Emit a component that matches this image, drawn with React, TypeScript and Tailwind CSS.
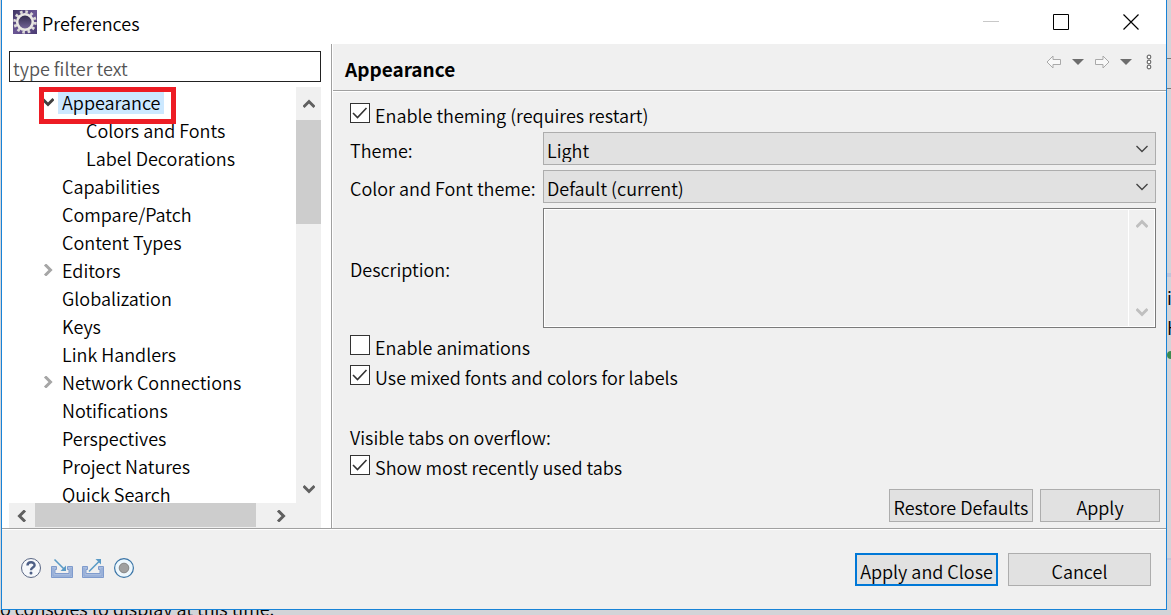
import { useState } from "react";
import type { ReactNode } from "react";
import clsx from "clsx";

interface TreeItem {
  label: string;
  child?: boolean;
  state?: "open" | "closed";
}

const treeItems: TreeItem[] = [
  { label: "Appearance", state: "open" },
  { label: "Colors and Fonts", child: true },
  { label: "Label Decorations", child: true },
  { label: "Capabilities" },
  { label: "Compare/Patch" },
  { label: "Content Types" },
  { label: "Editors", state: "closed" },
  { label: "Globalization" },
  { label: "Keys" },
  { label: "Link Handlers" },
  { label: "Network Connections", state: "closed" },
  { label: "Notifications" },
  { label: "Perspectives" },
  { label: "Project Natures" },
  { label: "Quick Search" },
];

const rotations = {
  up: "",
  right: "rotate-90",
  down: "rotate-180",
  left: "-rotate-90",
};

function Chevron({
  dir,
  className,
}: {
  dir: keyof typeof rotations;
  className?: string;
}) {
  return (
    <svg
      viewBox="0 0 12 12"
      className={clsx("size-3 shrink-0", rotations[dir], className)}
      fill="none"
      stroke="currentColor"
      strokeWidth="3"
    >
      <path d="M.5 9 6 3.500 11.500 9" />
    </svg>
  );
}

function GearIcon() {
  return (
    <svg viewBox="0 0 24 24" className="size-6 shrink-0">
      <defs>
        <linearGradient id="gear-bg" x1="0" y1="0" x2="1" y2="1">
          <stop offset="0" stopColor="#3f3561" />
          <stop offset="0.5" stopColor="#6a5694" />
          <stop offset="1" stopColor="#4a3b72" />
        </linearGradient>
        <linearGradient id="gear-core" x1="0" y1="0" x2="0" y2="1">
          <stop offset="0" stopColor="#2d2748" />
          <stop offset="1" stopColor="#79699e" />
        </linearGradient>
      </defs>
      <rect width="24" height="24" fill="url(#gear-bg)" />
      <circle
        cx="12"
        cy="12"
        r="10.200"
        fill="none"
        stroke="#dcdad8"
        strokeWidth="3"
        strokeDasharray="2.6 2.741"
      />
      <circle
        cx="12"
        cy="12"
        r="7.8"
        fill="url(#gear-core)"
        stroke="#e9e7e3"
        strokeWidth="2.6"
      />
    </svg>
  );
}

function ArrowIcon({ flip }: { flip?: boolean }) {
  return (
    <svg
      viewBox="0 0 16 14"
      className={clsx("h-3.5 w-4", flip && "-scale-x-100")}
      fill="#f8f8f8"
      stroke="#a9a9a9"
    >
      <path d="M1 7 7 1V4.500H14.500V9.500H7V13Z" strokeLinejoin="round" />
    </svg>
  );
}

function TriangleIcon() {
  return (
    <svg viewBox="0 0 12 6" className="h-1.5 w-3" fill="#6d6d6d">
      <path d="M0 0H12L6 6Z" />
    </svg>
  );
}

function MenuDotsIcon() {
  return (
    <svg
      viewBox="0 0 6 16"
      className="h-4 w-1.5"
      fill="#fff"
      stroke="#707070"
      strokeWidth="1.2"
    >
      <circle cx="3" cy="3" r="1.8" />
      <circle cx="3" cy="8" r="1.8" />
      <circle cx="3" cy="13" r="1.8" />
    </svg>
  );
}

function HelpIcon() {
  return (
    <svg viewBox="0 0 22 22" className="size-[22px]" fill="none">
      <circle cx="11" cy="11" r="9.500" fill="#f6f8fb" stroke="#5a6785" />
      <path
        d="M7.500 8.500C7.500 4.200 14.600 4.200 14.600 8.200C14.600 10.600 11 10.600 11 13.200"
        stroke="#4d5f86"
        strokeWidth="2.4"
      />
      <circle cx="11" cy="16" r="1.500" fill="#4d5f86" />
    </svg>
  );
}

function TrayIcon({ out }: { out?: boolean }) {
  return (
    <svg viewBox="0 0 22 22" className="size-[22px]" fill="none">
      <path
        d="M.5 9.500H5.500V12.500H4V16.500H18V12.500H16.500V9.500H21.500V20.500H.5Z"
        fill="#a9bddf"
        stroke="#7f9bcd"
      />
      <path d="M2 11V19H20V11" stroke="#8ca6d3" />
      {out ? (
        <>
          <path d="M7 14.500 17 4.500" stroke="#5a9ac6" strokeWidth="1.6" />
          <path d="M13.500 2H19V7.500Z" fill="#5a9ac6" />
        </>
      ) : (
        <>
          <path d="M3.500 2.500 13 12" stroke="#5a9ac6" strokeWidth="1.6" />
          <path d="M15 8.500V14H9.500Z" fill="#5a9ac6" />
        </>
      )}
    </svg>
  );
}

function RecordIcon() {
  return (
    <svg viewBox="0 0 22 22" className="size-[22px]">
      <circle cx="11" cy="11" r="9.400" fill="#edf7fd" stroke="#3a74a6" strokeWidth="1.2" />
      <circle cx="11" cy="11" r="4.800" fill="#a0a0a0" stroke="#858585" />
    </svg>
  );
}

function CheckField({
  label,
  defaultChecked,
}: {
  label: string;
  defaultChecked?: boolean;
}) {
  const [checked, setChecked] = useState(!!defaultChecked);
  return (
    <label className="flex h-[30px] w-fit items-center gap-[5px]">
      <span className="relative mb-1 flex">
        <input
          type="checkbox"
          checked={checked}
          onChange={(e) => setChecked(e.target.checked)}
          className="size-5 appearance-none border border-[#333] bg-white"
        />
        {checked && (
          <svg
            viewBox="0 0 20 20"
            className="pointer-events-none absolute inset-0 size-5"
            fill="none"
            stroke="#333"
            strokeWidth="1.6"
          >
            <path d="M3 10 7.500 14.500 16.500 5" />
          </svg>
        )}
      </span>
      {label}
    </label>
  );
}

function SelectField({ id, value }: { id: string; value: string }) {
  return (
    <div className="relative">
      <select
        id={id}
        className="block h-[33px] w-full appearance-none border border-[#adadad] bg-[#e1e1e1] px-[3px] pt-0.5"
      >
        <option>{value}</option>
      </select>
      <svg
        viewBox="0 0 12 8"
        className="pointer-events-none absolute top-[13px] right-2 h-2 w-3"
        fill="none"
        stroke="#444"
        strokeWidth="1.4"
      >
        <path d="M.5 1 6 6.500 11.500 1" />
      </svg>
    </div>
  );
}

function PushButton({
  primary,
  className,
  children,
}: {
  primary?: boolean;
  className?: string;
  children: ReactNode;
}) {
  return (
    <button
      type="button"
      className={clsx(
        "flex h-[33px] items-center justify-center bg-[#e1e1e1] pt-0.5 whitespace-nowrap",
        primary ? "border-2 border-[#0078d7]" : "border border-[#adadad]",
        className,
      )}
    >
      {children}
    </button>
  );
}

function TitleBar() {
  return (
    <header className="flex h-11 shrink-0 items-center bg-white pl-[11px]">
      <GearIcon />
      <h1 className="ml-[5px] pt-0.5">Preferences</h1>
      <div className="ml-auto flex">
        <button type="button" aria-label="Minimize" className="flex w-[70px] justify-center">
          <svg viewBox="0 0 16 16" className="size-4" stroke="#c8c8c8">
            <path d="M0 7.500H16" />
          </svg>
        </button>
        <button type="button" aria-label="Maximize" className="flex w-[70px] justify-center">
          <svg viewBox="0 0 16 16" className="size-4" fill="none" stroke="#000">
            <path d="M.5.5H15.500V15.500H.5Z" />
          </svg>
        </button>
        <button type="button" aria-label="Close" className="flex w-[70px] justify-center">
          <svg viewBox="0 0 16 16" className="size-4" stroke="#000" strokeWidth="1.2">
            <path d="M.5.5 15.500 15.500M15.500.5.5 15.500" />
          </svg>
        </button>
      </div>
    </header>
  );
}

function TreePane() {
  return (
    <aside className="flex w-[329px] shrink-0 flex-col bg-white pt-[7px] pr-2.5 pl-[7px]">
      <input
        type="text"
        aria-label="Filter"
        placeholder="type filter text"
        className="h-[31px] shrink-0 border border-[#222] px-[3px] pt-0.5 placeholder:text-[#555]"
      />
      <div className="relative mt-[5px] flex min-h-0 flex-1 flex-col">
        <div className="flex min-h-0 flex-1">
          <ul className="min-w-0 flex-1 overflow-hidden pt-px">
            {treeItems.map((item) => (
              <li
                key={item.label}
                className={clsx(
                  "flex h-7 items-center",
                  item.child ? "pl-[73px]" : "pl-[33px]",
                )}
              >
                {!item.child && (
                  <span className="flex w-4 shrink-0">
                    {item.state === "open" && (
                      <Chevron dir="down" className="text-[#404040]" />
                    )}
                    {item.state === "closed" && (
                      <Chevron dir="right" className="text-[#a6a6a6]" />
                    )}
                  </span>
                )}
                <span
                  className={clsx(
                    "px-1 leading-6 whitespace-nowrap",
                    item.state === "open" && "bg-[#cce8ff]",
                  )}
                >
                  {item.label}
                </span>
              </li>
            ))}
          </ul>
          <div className="flex w-[25px] shrink-0 flex-col items-center bg-[#f0f0f0] text-[#606060]">
            <div className="flex h-[33px] items-center">
              <Chevron dir="up" />
            </div>
            <div className="h-1/4 w-full bg-[#cdcdcd]" />
            <div className="mt-auto flex h-7 items-center">
              <Chevron dir="down" />
            </div>
          </div>
        </div>
        <div className="flex h-[25px] shrink-0 items-center bg-[#f0f0f0] pr-[25px] text-[#606060]">
          <div className="flex w-[26px] justify-center">
            <Chevron dir="left" />
          </div>
          <div className="h-6 w-[221px] self-start bg-[#cdcdcd]" />
          <div className="ml-auto flex w-[30px] justify-center">
            <Chevron dir="right" />
          </div>
        </div>
        <div className="pointer-events-none absolute top-0 left-[30px] h-[37px] w-[137px] border-5 border-[#ed1c24]" />
      </div>
    </aside>
  );
}

function AppearancePage() {
  return (
    <main className="flex min-w-0 flex-1 flex-col">
      <div className="flex h-[47px] shrink-0 items-center border-b border-[#a0a0a0] pr-3.5 pl-3">
        <h2 className="pt-1 text-[19px] font-bold">Appearance</h2>
        <div className="mb-2.5 ml-auto flex items-center gap-2.5">
          <button type="button" aria-label="Back">
            <ArrowIcon />
          </button>
          <button type="button" aria-label="Back history">
            <TriangleIcon />
          </button>
          <button type="button" aria-label="Forward">
            <ArrowIcon flip />
          </button>
          <button type="button" aria-label="Forward history">
            <TriangleIcon />
          </button>
          <button type="button" aria-label="View menu" className="ml-1">
            <MenuDotsIcon />
          </button>
        </div>
      </div>
      <div className="flex flex-1 flex-col border-t border-white pr-1.5 pb-1.5 pl-[17px]">
        <div className="flex flex-col pt-2 pr-1">
          <CheckField label="Enable theming (requires restart)" defaultChecked />
          <div className="mt-0.5 grid grid-cols-[193px_1fr] items-center gap-y-[5px]">
            <label htmlFor="theme" className="pt-0.5">
              Theme:
            </label>
            <SelectField id="theme" value="Light" />
            <label htmlFor="font-theme" className="pt-0.5">
              Color and Font theme:
            </label>
            <SelectField id="font-theme" value="Default (current)" />
            <label htmlFor="description" className="pt-0.5">
              Description:
            </label>
            <div className="flex h-[120px] border border-[#7a7a7a] bg-white p-px">
              <textarea
                id="description"
                readOnly
                className="min-w-0 flex-1 resize-none bg-[#f0f0f0]"
              />
              <div className="ml-px flex w-[25px] flex-col items-center justify-between bg-[#f0f0f0] py-2 text-[#bfbfbf]">
                <Chevron dir="up" />
                <Chevron dir="down" />
              </div>
            </div>
          </div>
          <div className="mt-1">
            <CheckField label="Enable animations" />
            <CheckField label="Use mixed fonts and colors for labels" defaultChecked />
          </div>
          <p className="mt-[30px] flex h-[30px] items-center">Visible tabs on overflow:</p>
          <CheckField label="Show most recently used tabs" defaultChecked />
        </div>
        <div className="mt-auto flex justify-end gap-[7px]">
          <PushButton className="w-36">Restore Defaults</PushButton>
          <PushButton className="w-[120px]">Apply</PushButton>
        </div>
      </div>
    </main>
  );
}

function Footer() {
  return (
    <footer className="flex h-20 shrink-0 items-center border-t border-white pr-[15px] pl-[18px]">
      <div className="mb-1 flex gap-[9px]">
        <button type="button" aria-label="Help">
          <HelpIcon />
        </button>
        <button type="button" aria-label="Import">
          <TrayIcon />
        </button>
        <button type="button" aria-label="Export">
          <TrayIcon out />
        </button>
        <button type="button" aria-label="Record">
          <RecordIcon />
        </button>
      </div>
      <div className="ml-auto flex gap-2.5">
        <PushButton primary className="w-[143px]">
          Apply and Close
        </PushButton>
        <PushButton className="w-[143px]">Cancel</PushButton>
      </div>
    </footer>
  );
}

export default function App() {
  return (
    <div className="flex h-screen flex-col overflow-hidden bg-[#d3d4d8] font-['Noto_Sans_CJK_KR',sans-serif] text-[18px] leading-6 font-[350] text-black">
      <div className="flex min-h-0 flex-1 pl-px">
        <div className="flex min-w-0 flex-1 flex-col border-x border-b border-[#1883d7] bg-[#f0f0f0]">
          <TitleBar />
          <div className="flex min-h-0 flex-1 border-b border-[#a0a0a0]">
            <TreePane />
            <div className="w-0.5 shrink-0 border-r border-l border-r-white border-l-[#a0a0a0]" />
            <AppearancePage />
          </div>
          <Footer />
        </div>
        <div className="flex w-1 shrink-0 flex-col overflow-hidden">
          <div className="h-[59px] shrink-0 border-b border-[#777]" />
          <div className="h-[30px] shrink-0 border-b border-[#777]" />
          <div className="mt-[184px] h-1 shrink-0 bg-[#bfc4d8]" />
          <span className="mt-2">i</span>
          <span className="mt-1.5">H</span>
          <span className="mt-3 size-2 shrink-0 rounded-full bg-[#3c8a50]" />
          <div className="mt-auto mb-4 h-9 shrink-0 border-t-2 border-[#bfc4d8] bg-[#cfd0dc]" />
        </div>
      </div>
      <div className="flex h-[5px] shrink-0 items-end overflow-hidden">
        <p className="leading-[14px] whitespace-nowrap">o consoles to display at this time.</p>
      </div>
    </div>
  );
}
